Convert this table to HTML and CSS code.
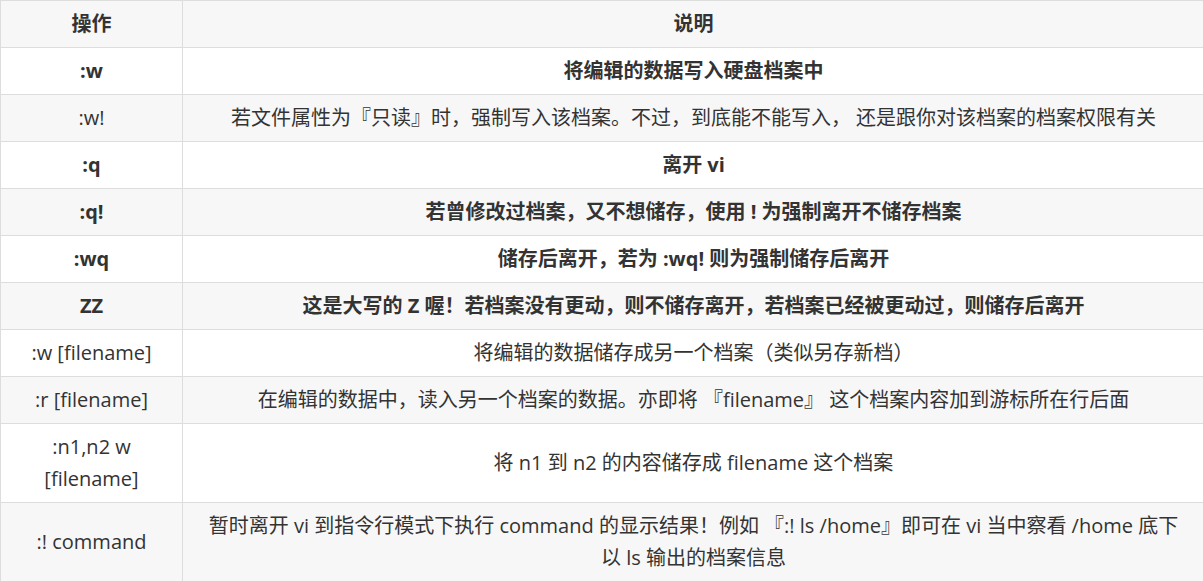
FILE: index.html
```html
<!DOCTYPE html>
<html lang="zh-CN">
<head>
<meta charset="utf-8">
<title>vi 指令</title>
<link rel="stylesheet" href="styles.css">
</head>
<body>
<table class="cmd-table">
  <colgroup>
    <col class="col-op">
    <col class="col-desc">
  </colgroup>
  <thead>
    <tr><th>操作</th><th>说明</th></tr>
  </thead>
  <tbody>
    <tr><td><strong>:w</strong></td><td><strong>将编辑的数据写入硬盘档案中</strong></td></tr>
    <tr><td>:w!</td><td>若文件属性为『只读』时，强制写入该档案。不过，到底能不能写入， 还是跟你对该档案的档案权限有关</td></tr>
    <tr><td><strong>:q</strong></td><td><strong>离开 vi</strong></td></tr>
    <tr><td><strong>:q!</strong></td><td><strong>若曾修改过档案，又不想储存，使用 ! 为强制离开不储存档案</strong></td></tr>
    <tr><td><strong>:wq</strong></td><td><strong>储存后离开，若为 :wq! 则为强制储存后离开</strong></td></tr>
    <tr><td><strong>ZZ</strong></td><td><strong>这是大写的 Z 喔！若档案没有更动，则不储存离开，若档案已经被更动过，则储存后离开</strong></td></tr>
    <tr><td>:w [filename]</td><td>将编辑的数据储存成另一个档案（类似另存新档）</td></tr>
    <tr><td>:r [filename]</td><td>在编辑的数据中，读入另一个档案的数据。亦即将 『filename』 这个档案内容加到游标所在行后面</td></tr>
    <tr><td>:n1,n2 w [filename]</td><td>将 n1 到 n2 的内容储存成 filename 这个档案</td></tr>
    <tr><td>:! command</td><td>暂时离开 vi 到指令行模式下执行 command 的显示结果！例如 『:! ls /home』即可在 vi 当中察看 /home 底下以 ls 输出的档案信息</td></tr>
  </tbody>
</table>
</body>
</html>
```

FILE: styles.css
```css
html, body {
  margin: 0;
  padding: 0;
  background: #ffffff;
}

body {
  font-family: "Open Sans", "Noto Sans CJK SC", sans-serif;
  font-size: 20px;
  color: #333333;
}

.cmd-table {
  border-collapse: collapse;
  table-layout: fixed;
  width: 1205px;
}

.col-op {
  width: 182px;
}

.cmd-table th,
.cmd-table td {
  border: 1px solid #dddddd;
  padding: 7px 18px;
  line-height: 32px;
  text-align: center;
  vertical-align: middle;
  font-weight: normal;
}

.cmd-table th,
.cmd-table strong {
  font-weight: 700;
}

.cmd-table thead tr {
  background: #f7f7f7;
}

.cmd-table tbody tr:nth-child(even) {
  background: #f7f7f7;
}

.cmd-table tbody tr:nth-child(odd) {
  background: #ffffff;
}
```
